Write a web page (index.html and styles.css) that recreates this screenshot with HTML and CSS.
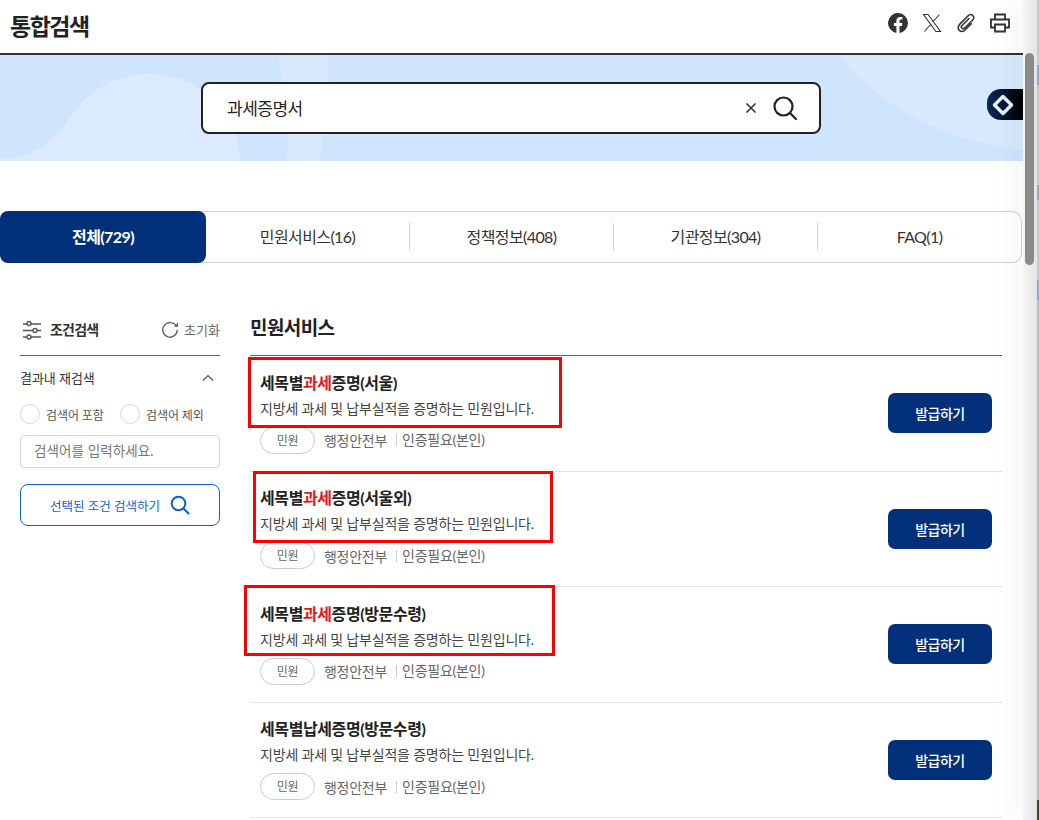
FILE: index.html
```html
<!DOCTYPE html>
<html lang="ko">
<head>
<meta charset="utf-8">
<title>통합검색</title>
<link rel="stylesheet" href="styles.css">
</head>
<body>
<div class="window">
  <div class="page">
    <header class="topbar">
      <h1 class="page-title">통합검색</h1>
      <div class="share">
        <svg viewBox="0 0 24 24" width="20" height="20"><path fill="#333" d="M24 12a12 12 0 1 0-13.900 11.900v-8.400H7.100V12h3V9.400c0-3 1.800-4.700 4.500-4.700 1.300 0 2.700.2 2.700.2v3h-1.500c-1.500 0-2 .9-2 1.900V12h3.400l-.5 3.500h-2.900v8.400A12 12 0 0 0 24 12z"/></svg>
        <svg viewBox="0 0 20 20" width="20" height="20"><path fill="none" stroke="#333" stroke-width="1.100" d="M1.500 1.500h4.600l12.400 17h-4.600zM17.500 1.500l-6.900 7.500M9.200 11l-6.900 7.500"/></svg>
        <svg viewBox="0 0 20 20" width="20" height="20"><path fill="none" stroke="#333" stroke-width="1.600" stroke-linecap="round" d="M13 5.500 6 12.500c-1 1-1 2 0 2.700.7.700 1.700.7 2.500 0l8-8c1.600-1.700 1.600-3.500.3-4.700-1.300-1.300-3.100-1.200-4.700.3l-8.300 8.300c-2.100 2.200-2.100 4.700-.5 6.200 1.600 1.500 4 1.500 6-.5l6-6"/></svg>
        <svg viewBox="0 0 20 20" width="20" height="20"><path fill="none" stroke="#333" stroke-width="1.800" d="M5 6V1.500h10V6M5 14.500H1V6.500h18v8h-4M5 11.500h10v7H5z"/></svg>
      </div>
    </header>

    <section class="hero">
      <svg class="hero-bg" viewBox="0 0 1023 106" width="1023" height="106">
        <path fill="#d8e9fe" d="M838 0C870 40 930 85 1023 95V0z"/>
        <path fill="#d8e9fe" d="M278 0C284 30 290 60 287 106H320C324 70 328 30 328 0z"/>
        <path fill="#dbeafe" d="M0 103C35 103 55 85 72 60 90 35 115 19 147 19 195 19 240 50 240 106H0z"/>
      </svg>
      <div class="search-box">
        <span class="search-text">과세증명서</span>
        <span class="search-clear">
          <svg viewBox="0 0 12 12" width="12" height="12"><path stroke="#333" stroke-width="1.600" d="M1.500 1.500l9 9M10.500 1.500l-9 9"/></svg>
        </span>
        <svg viewBox="0 0 26 26" width="26" height="26"><circle cx="11.500" cy="11.500" r="9" fill="none" stroke="#222" stroke-width="2.200"/><path stroke="#222" stroke-width="2.200" stroke-linecap="round" d="M18 18l6 6"/></svg>
      </div>
      <div class="float-badge">
        <svg viewBox="0 0 24 24" width="24" height="24"><path fill="none" stroke="#e8f0f7" stroke-width="3.500" stroke-linejoin="round" d="M12 3.500 20.500 12 12 20.500 3.500 12z"/></svg>
      </div>
    </section>

    <nav class="tabs">
      <a class="tab tab-active">전체(729)</a>
      <a class="tab">민원서비스(16)</a>
      <a class="tab tab-sep">정책정보(408)</a>
      <a class="tab tab-sep">기관정보(304)</a>
      <a class="tab tab-sep">FAQ(1)</a>
    </nav>

    <div class="content">
      <aside class="filters">
        <div class="filter-head">
          <svg viewBox="0 0 20 20" width="20" height="20"><g fill="#fff" stroke="#555" stroke-width="1.400"><path d="M1 4h18M1 10.500h18M1 17h18"/><circle cx="7" cy="3.500" r="2"/><circle cx="13" cy="10.500" r="2"/><circle cx="7" cy="17" r="2"/></g></svg>
          <strong class="filter-title">조건검색</strong>
          <span class="reset">
            <svg viewBox="0 0 18 18" width="18" height="18"><path fill="none" stroke="#666" stroke-width="1.400" d="M15.500 6.500A7.300 7.300 0 1 0 16.300 10"/><path fill="#666" d="M12.800 6.800h4.200V2.500z"/></svg>
            초기화
          </span>
        </div>
        <div class="filter-sub">
          <span>결과내 재검색</span>
          <svg viewBox="0 0 12 8" width="12" height="8"><path fill="none" stroke="#555" stroke-width="1.200" d="M1 6.500 6 1.500l5 5"/></svg>
        </div>
        <div class="radios">
          <label class="radio"><span class="radio-dot"></span>검색어 포함</label>
          <label class="radio"><span class="radio-dot"></span>검색어 제외</label>
        </div>
        <div class="filter-input">검색어를 입력하세요.</div>
        <button class="filter-btn">
          선택된 조건 검색하기
          <svg viewBox="0 0 20 20" width="20" height="20"><circle cx="8.500" cy="8.500" r="6.800" fill="none" stroke="#0b63ce" stroke-width="2"/><path stroke="#0b63ce" stroke-width="2" stroke-linecap="round" d="M13.500 13.500l5 5"/></svg>
        </button>
      </aside>

      <main class="results">
        <h2 class="section-title">민원서비스</h2>
        <ul class="list">
          <li class="item">
            <div class="mark mark-1"></div>
            <div class="item-body">
              <h3 class="item-title">세목별<em>과세</em>증명(서울)</h3>
              <p class="item-desc">지방세 과세 및 납부실적을 증명하는 민원입니다.</p>
              <div class="item-meta"><span class="chip">민원</span><span class="org">행정안전부</span><span class="auth">인증필요(본인)</span></div>
            </div>
            <button class="issue">발급하기</button>
          </li>
          <li class="item">
            <div class="mark mark-2"></div>
            <div class="item-body">
              <h3 class="item-title">세목별<em>과세</em>증명(서울외)</h3>
              <p class="item-desc">지방세 과세 및 납부실적을 증명하는 민원입니다.</p>
              <div class="item-meta"><span class="chip">민원</span><span class="org">행정안전부</span><span class="auth">인증필요(본인)</span></div>
            </div>
            <button class="issue">발급하기</button>
          </li>
          <li class="item">
            <div class="mark mark-3"></div>
            <div class="item-body">
              <h3 class="item-title">세목별<em>과세</em>증명(방문수령)</h3>
              <p class="item-desc">지방세 과세 및 납부실적을 증명하는 민원입니다.</p>
              <div class="item-meta"><span class="chip">민원</span><span class="org">행정안전부</span><span class="auth">인증필요(본인)</span></div>
            </div>
            <button class="issue">발급하기</button>
          </li>
          <li class="item">
            <div class="item-body">
              <h3 class="item-title">세목별납세증명(방문수령)</h3>
              <p class="item-desc">지방세 과세 및 납부실적을 증명하는 민원입니다.</p>
              <div class="item-meta"><span class="chip">민원</span><span class="org">행정안전부</span><span class="auth">인증필요(본인)</span></div>
            </div>
            <button class="issue">발급하기</button>
          </li>
        </ul>
      </main>
    </div>
  </div>
  <div class="gutter"><div class="thumb"></div></div>
  <div class="edge"></div>
</div>
</body>
</html>
```

FILE: styles.css
```css
* { box-sizing: border-box; }
html, body { margin: 0; height: 820px; overflow: hidden; background: #fff; }
body { font-family: "Lato", "Noto Sans CJK KR", sans-serif; color: #222; }
h1, h2, h3, p, ul { margin: 0; padding: 0; }
ul { list-style: none; }
em { font-style: normal; color: #e8141c; }
button { font-family: inherit; cursor: pointer; }

.window { display: flex; width: 1039px; height: 820px; overflow: hidden; }
.page { width: 1023px; flex: none; }

.gutter { position: relative; width: 14px; flex: none; background: linear-gradient(to right, #f5f5f5, #e4e4e4); padding: 53px 0 0 2px; box-shadow: -14px 0 18px rgba(0, 0, 0, .045); }
.thumb { width: 9px; height: 212px; background: #8a8a8a; border-radius: 5px; }
.edge { width: 2px; flex: none; background: linear-gradient(to bottom, #c9c9c9 0 65px, #8fa9c9 65px 85px, #c9c9c9 85px 185px, #8fa9c9 185px 200px, #c9c9c9 200px 280px, #8fa9c9 280px 300px, #bdbdbd 300px 800px, #443 800px 820px); }

.topbar { height: 55px; display: flex; align-items: center; justify-content: space-between; padding: 0 13px 0 10px; border-bottom: 2px solid #333; }
.page-title { font-size: 23px; font-weight: 700; letter-spacing: -1.500px; color: #222; line-height: 32px; margin-top: -1px; }
.share { display: flex; gap: 14px; margin-top: -8px; }

.hero { position: relative; height: 106px; background: #cfe5fd; overflow: hidden; display: flex; justify-content: center; padding: 27px 0 0 0; }
.hero-bg { position: absolute; left: 0; top: 0; }
.search-box { position: relative; width: 620px; height: 52px; margin-left: -1px; background: #fff; border: 2px solid #222; border-radius: 8px; display: flex; align-items: center; padding: 0 21px 0 24px; }
.search-text { flex: 1; font-size: 17px; letter-spacing: -0.500px; color: #222; margin-top: -2px; }
.search-clear { display: flex; margin-right: 15px; }
.float-badge { position: absolute; left: 987px; top: 34px; width: 36px; height: 31px; border-radius: 14px 0 0 14px; background: linear-gradient(to right, #0a2a5c, #000); display: flex; align-items: center; padding-left: 4px; }

.tabs { display: flex; height: 52px; margin-top: 50px; margin-right: 1px; border: 1px solid #d2d2d2; border-left: 0; border-radius: 10px; align-items: center; }
.tab { flex: 1; text-align: center; font-size: 16px; letter-spacing: -0.600px; color: #333; line-height: 28px; }
.tab-active { flex: none; width: 206px; height: 52px; margin: -1px 0; line-height: 52px; background: #03307a; color: #fff; font-weight: 700; border-radius: 8px; }
.tab-sep { border-left: 1px solid #d5d5d5; }

.content { display: flex; padding: 53px 21px 0 20px; gap: 30px; }

.filters { width: 200px; flex: none; }
.filter-head { display: flex; align-items: center; height: 26px; }
.filter-head > svg { margin: 1px 8px 0 2px; }
.filter-title { flex: 1; font-size: 14px; letter-spacing: -0.800px; color: #333; }
.reset { display: flex; align-items: center; gap: 5px; font-size: 13px; letter-spacing: 0; color: #666; margin-left: -2px; }
.filter-sub { display: flex; justify-content: space-between; align-items: center; height: 44px; margin-top: 13px; border-top: 1px solid #666; padding-right: 6px; font-size: 13px; letter-spacing: -0.050px; color: #333; }
.radios { display: flex; gap: 6px; margin-top: 1px; height: 28px; align-items: center; }
.radio { display: flex; align-items: center; gap: 6px; font-size: 12px; letter-spacing: -0.100px; color: #555; width: 94px; }
.radio-dot { width: 20px; height: 20px; border: 1px solid #d8d8d8; border-radius: 50%; background: #fff; flex: none; }
.filter-input { height: 33px; margin-top: 7px; border: 1px solid #d9d9d9; border-radius: 4px; padding-left: 13px; font-size: 13.500px; line-height: 30px; letter-spacing: 0.100px; color: #777; }
.filter-btn { width: 200px; height: 42px; margin-top: 16px; background: #fff; border: 1px solid #0b63ce; border-radius: 8px; color: #0b63ce; font-size: 12.500px; letter-spacing: 0; display: flex; align-items: center; justify-content: center; gap: 10px; padding: 0; }

.results { flex: 1; }
.section-title { font-size: 19px; font-weight: 700; letter-spacing: -0.600px; line-height: 26px; color: #222; margin-top: -1px; }
.list { margin-top: 14px; border-top: 1px solid #666; }
.item { position: relative; height: 115.500px; display: flex; align-items: center; justify-content: space-between; padding: 0 10px; border-bottom: 1px solid #e2e2e2; }
.item-body { margin-top: -2px; }
.item-title { font-size: 16px; font-weight: 700; letter-spacing: -0.400px; line-height: 24px; color: #222; }
.item-desc { font-size: 14px; letter-spacing: -0.190px; line-height: 20px; color: #444; margin-top: 4px; }
.item-meta { display: flex; align-items: center; margin-top: 8px; font-size: 14px; letter-spacing: -0.270px; color: #666; }
.chip { width: 55px; height: 27px; border: 1px solid #ccc; border-radius: 14px; text-align: center; font-size: 12px; line-height: 25px; margin-right: 9px; }
.auth { border-left: 1px solid #ccc; margin-left: 9px; padding-left: 5px; line-height: 12px; }
.issue { width: 104px; height: 40px; background: #03307a; color: #fff; border: 0; border-radius: 7px; font-size: 14px; font-weight: 500; letter-spacing: -0.500px; }

.mark { position: absolute; border: 3px solid #f00; pointer-events: none; }
.mark-1 { left: -2px; top: 1px; width: 314px; height: 71px; }
.mark-2 { left: 3px; top: -1px; width: 300px; height: 72px; }
.mark-3 { left: -6px; top: -2px; width: 311px; height: 71px; }
```
